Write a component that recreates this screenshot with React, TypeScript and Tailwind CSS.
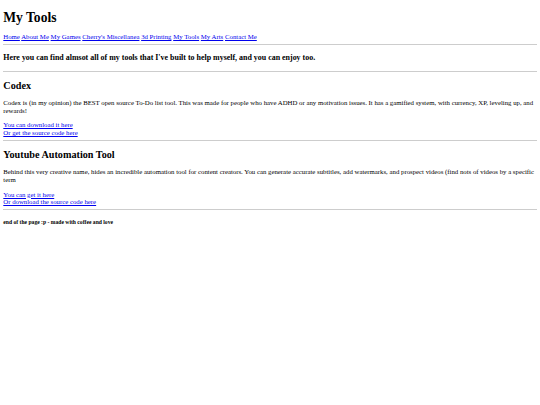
const navLinks = [
  'Home',
  'About Me',
  'My Games',
  "Cherry's Miscellanea",
  '3d Printing',
  'My Tools',
  'My Arts',
  'Contact Me',
];

interface Tool {
  name: string;
  description: string;
  links: string[];
}

const tools: Tool[] = [
  {
    name: 'Codex',
    description:
      'Codex is (in my opinion) the BEST open source To-Do list tool. This was made for people who have ADHD or any motivation issues. It has a gamified system, with currency, XP, leveling up, and rewards!',
    links: ['You can download it here', 'Or get the source code here'],
  },
  {
    name: 'Youtube Automation Tool',
    description:
      'Behind this very creative name, hides an incredible automation tool for content creators. You can generate accurate subtitles, add watermarks, and prospect videos (find nots of videos by a specific term',
    links: ['You can get it here', 'Or download the source code here'],
  },
];

function Rule() {
  return <hr className="my-[3.3px] h-0 border-t border-[#cdcdcd]" />;
}

function A({ children }: { children: React.ReactNode }) {
  return (
    <a href="#" className="text-[#0000ee] underline">
      {children}
    </a>
  );
}

export default function App() {
  return (
    <div className="bg-white min-h-screen px-[3.3px] pt-px font-['Liberation_Serif','Times_New_Roman',serif] text-[6.79px] leading-[7.54px] text-black">
      <h1 className="text-[13.58px] leading-[15.07px] font-bold mt-[8.8px] mb-[8.4px]">My Tools</h1>

      <div>
        {navLinks.map((l, i) => (
          <span key={l}>
            <A>{l}</A>
            {i < navLinks.length - 1 && ' '}
          </span>
        ))}
      </div>

      <Rule />
      <h3 className="text-[7.95px] leading-[8.82px] font-bold mt-[9.2px] mb-[7.68px]">
        Here you can find almsot all of my tools that I've built to help myself, and you can enjoy too.
      </h3>
      <Rule />

      {tools.map((t) => (
        <section key={t.name}>
          <h2 className="text-[10.18px] leading-[11.3px] font-bold my-[8.17px]">{t.name}</h2>
          <p className="my-[6.56px]">{t.description}</p>
          <p className="mt-[7px] mb-[3.3px]">
            <A>{t.links[0]}</A>
            <br />
            <A>{t.links[1]}</A>
          </p>
          <Rule />
        </section>
      ))}

      <h5 className="text-[5.63px] leading-[6.25px] font-bold my-[9.1px]">end of the page :p - made with coffee and love</h5>
    </div>
  );
}
